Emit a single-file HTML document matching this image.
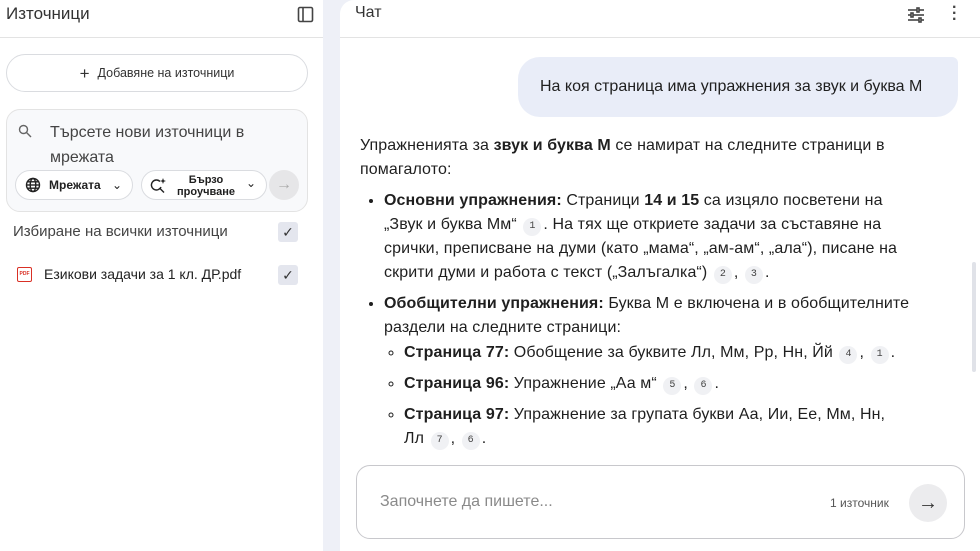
<!DOCTYPE html>
<html><head><meta charset="utf-8"><style>
*{box-sizing:border-box;margin:0;padding:0}
body{width:980px;height:551px;overflow:hidden;background:#eef0f7;font-family:"Liberation Sans","DejaVu Sans",sans-serif;color:#1f1f1f;position:relative}
.left{position:absolute;left:0;top:0;width:323px;height:551px;background:#fff}
.right{position:absolute;left:340px;top:0;width:640px;height:551px;background:#fff;border-radius:14px 0 0 0;overflow:hidden}
.abs{position:absolute}
.cite{display:inline-block;min-width:18px;height:18px;border-radius:9px;background:#f0f1f4;font-size:10px;text-align:center;line-height:18px;color:#444;font-family:"Liberation Mono",monospace;vertical-align:1px;margin:0 2px;letter-spacing:0}
.main{position:absolute;left:20px;top:134px;width:566px;font-size:16px;letter-spacing:0.1px;line-height:24px}
ul{padding-left:24px}
li{margin-top:7px}
ul ul{list-style:circle;padding-left:20px}
ul ul li{margin-top:7px}
</style></head><body>
<div class="left">
 <div class="abs" style="left:6px;top:4px;font-size:17px;color:#333">Източници</div>
 <svg class="abs" style="left:297px;top:6px" width="17" height="17" viewBox="0 0 17 17"><rect x="1.5" y="1.5" width="14" height="14" rx="1.5" fill="none" stroke="#444" stroke-width="1.6"/><line x1="6" y1="2" x2="6" y2="15" stroke="#444" stroke-width="1.6"/></svg>
 <div class="abs" style="left:0;top:37px;width:323px;border-top:1px solid #e3e3e3"></div>
 <div class="abs" style="left:6px;top:54px;width:302px;height:38px;border:1px solid #dadce0;border-radius:19px;text-align:center;line-height:36px;font-size:12.5px;color:#333"><span style="font-size:17px;vertical-align:-2px;margin-right:8px">+</span>Добавяне на източници</div>
 <div class="abs" style="left:6px;top:109px;width:302px;height:103px;border:1px solid #e3e3e3;border-radius:14px;background:#f8f9fb">
  <svg class="abs" style="left:11px;top:14px" width="14" height="14" viewBox="0 0 14 14"><circle cx="5.5" cy="5.5" r="4" fill="none" stroke="#666" stroke-width="1.4"/><line x1="8.5" y1="8.5" x2="13" y2="13" stroke="#666" stroke-width="1.4"/></svg>
  <div class="abs" style="left:43px;top:10px;width:250px;font-size:16px;line-height:25px;color:#444">Търсете нови източници в мрежата</div>
  <div class="abs" style="left:8px;top:60px;width:118px;height:30px;border:1px solid #dadce0;border-radius:15px;background:#fff;font-size:12px;font-weight:bold;line-height:28px;padding-left:33px">Мрежата<span style="position:absolute;right:10px;font-weight:normal">⌄</span>
   <svg class="abs" style="left:9px;top:6px" width="16" height="16" viewBox="0 0 16 16"><g fill="none" stroke="#222" stroke-width="1.4"><circle cx="8" cy="8" r="6.5"/><ellipse cx="8" cy="8" rx="2.8" ry="6.5"/><line x1="1.5" y1="8" x2="14.5" y2="8"/><line x1="2.5" y1="4.8" x2="13.5" y2="4.8"/><line x1="2.5" y1="11.2" x2="13.5" y2="11.2"/></g></svg></div>
  <div class="abs" style="left:134px;top:60px;width:126px;height:30px;border:1px solid #dadce0;border-radius:15px;background:#fff;font-size:11px;font-weight:bold;line-height:12px;text-align:center;padding-top:3px;padding-right:14px;padding-left:18px">Бързо<br>проучване<span style="position:absolute;right:10px;top:6px;font-weight:normal;font-size:12px">⌄</span>
   <svg class="abs" style="left:8px;top:6px" width="18" height="18" viewBox="0 0 18 18"><g fill="none" stroke="#222" stroke-width="1.4"><path d="M10 4.5A5 5 0 1 0 11 10"/><line x1="9.5" y1="11" x2="14" y2="15.5"/></g><path d="M13 1l.8 2.2L16 4l-2.2.8L13 7l-.8-2.2L10 4l2.2-.8z" fill="#222"/></svg></div>
  <div class="abs" style="left:262px;top:60px;width:30px;height:30px;border-radius:15px;background:#e6e6e8;color:#aaa;text-align:center;line-height:30px;font-size:16px">→</div>
 </div>
 <div class="abs" style="left:13px;top:223px;font-size:15px;color:#444">Избиране на всички източници</div>
 <div class="abs" style="left:278px;top:222px;width:20px;height:20px;background:#e4e6ee;border-radius:3px;text-align:center;line-height:20px;font-size:14px;color:#333">✓</div>
 <div class="abs" style="left:17px;top:267px;width:15px;height:15px;border:1.5px solid #d93025;border-radius:2px;font-size:5px;color:#d93025;font-weight:bold;text-align:center;line-height:12px">PDF</div>
 <div class="abs" style="left:44px;top:266px;font-size:14px;color:#222">Езикови задачи за 1 кл. ДР.pdf</div>
 <div class="abs" style="left:278px;top:265px;width:20px;height:20px;background:#e4e6ee;border-radius:3px;text-align:center;line-height:20px;font-size:14px;color:#333">✓</div>
</div>
<div class="right">
 <div class="abs" style="left:15px;top:4px;font-size:16px;color:#333">Чат</div>
 <svg class="abs" style="left:567px;top:6px" width="18" height="18" viewBox="0 0 18 18"><g stroke="#444" stroke-width="1.6"><line x1="1" y1="4" x2="17" y2="4"/><line x1="1" y1="9" x2="17" y2="9"/><line x1="1" y1="14" x2="17" y2="14"/></g><g fill="#fff" stroke="#444" stroke-width="1.6"><rect x="10" y="2" width="2" height="4"/><rect x="4" y="7" width="2" height="4"/><rect x="12" y="12" width="2" height="4"/></g></svg>
 <div class="abs" style="left:612px;top:5px;font-size:16px;line-height:6px;color:#444;font-weight:bold">·<br>·<br>·</div>
 <div class="abs" style="left:0;top:37px;width:640px;border-top:1px solid #e3e3e3"></div>
 <div class="abs" style="left:178px;top:57px;width:440px;height:60px;background:#e9edf8;border-radius:22px 6px 22px 22px;font-size:16px;line-height:60px;padding-left:22px">На коя страница има упражнения за звук и буква М</div>
 <div class="main">Упражненията за <b>звук и буква М</b> се намират на следните страници в помагалото:
  <ul>
   <li><b>Основни упражнения:</b> Страници <b>14 и 15</b> са изцяло посветени на<br>„Звук и буква Мм“ <span class="cite">1</span>. На тях ще откриете задачи за съставяне на срички, преписване на думи (като „мама“, „ам-ам“, „ала“), писане на скрити думи и работа с текст („Залъгалка“) <span class="cite">2</span>, <span class="cite">3</span>.</li>
   <li><b>Обобщителни упражнения:</b> Буква М е включена и в обобщителните<br>раздели на следните страници:
    <ul>
     <li style="margin-top:1px"><b>Страница 77:</b> Обобщение за буквите Лл, Мм, Рр, Нн, Йй <span class="cite">4</span>, <span class="cite">1</span>.</li>
     <li><b>Страница 96:</b> Упражнение „Аа м“ <span class="cite">5</span>, <span class="cite">6</span>.</li>
     <li><b>Страница 97:</b> Упражнение за групата букви Аа, Ии, Ее, Мм, Нн,<br>Лл <span class="cite">7</span>, <span class="cite">6</span>.</li>
     <li><b>Страница 98:</b> Упражнение за букви Аа, Ии, Ее, Оо, Уу, Мм, Нн</li>
    </ul></li>
  </ul></div>
 <div class="abs" style="left:0;top:452px;width:640px;height:99px;background:#fff"></div>
 <div class="abs" style="left:16px;top:465px;width:609px;height:74px;border:1px solid #c8c8cc;border-radius:14px;background:#fff">
  <div class="abs" style="left:23px;top:27px;font-size:16px;color:#8a8a8a">Започнете да пишете...</div>
  <div class="abs" style="left:473px;top:30px;font-size:12px;color:#555">1 източник</div>
  <div class="abs" style="left:552px;top:18px;width:38px;height:38px;border-radius:19px;background:#ececee;text-align:center;line-height:38px;font-size:20px;color:#333">→</div>
 </div>
 <div class="abs" style="left:632px;top:262px;width:4px;height:110px;border-radius:2px;background:#e0e2e8"></div>
</div>
</body></html>
